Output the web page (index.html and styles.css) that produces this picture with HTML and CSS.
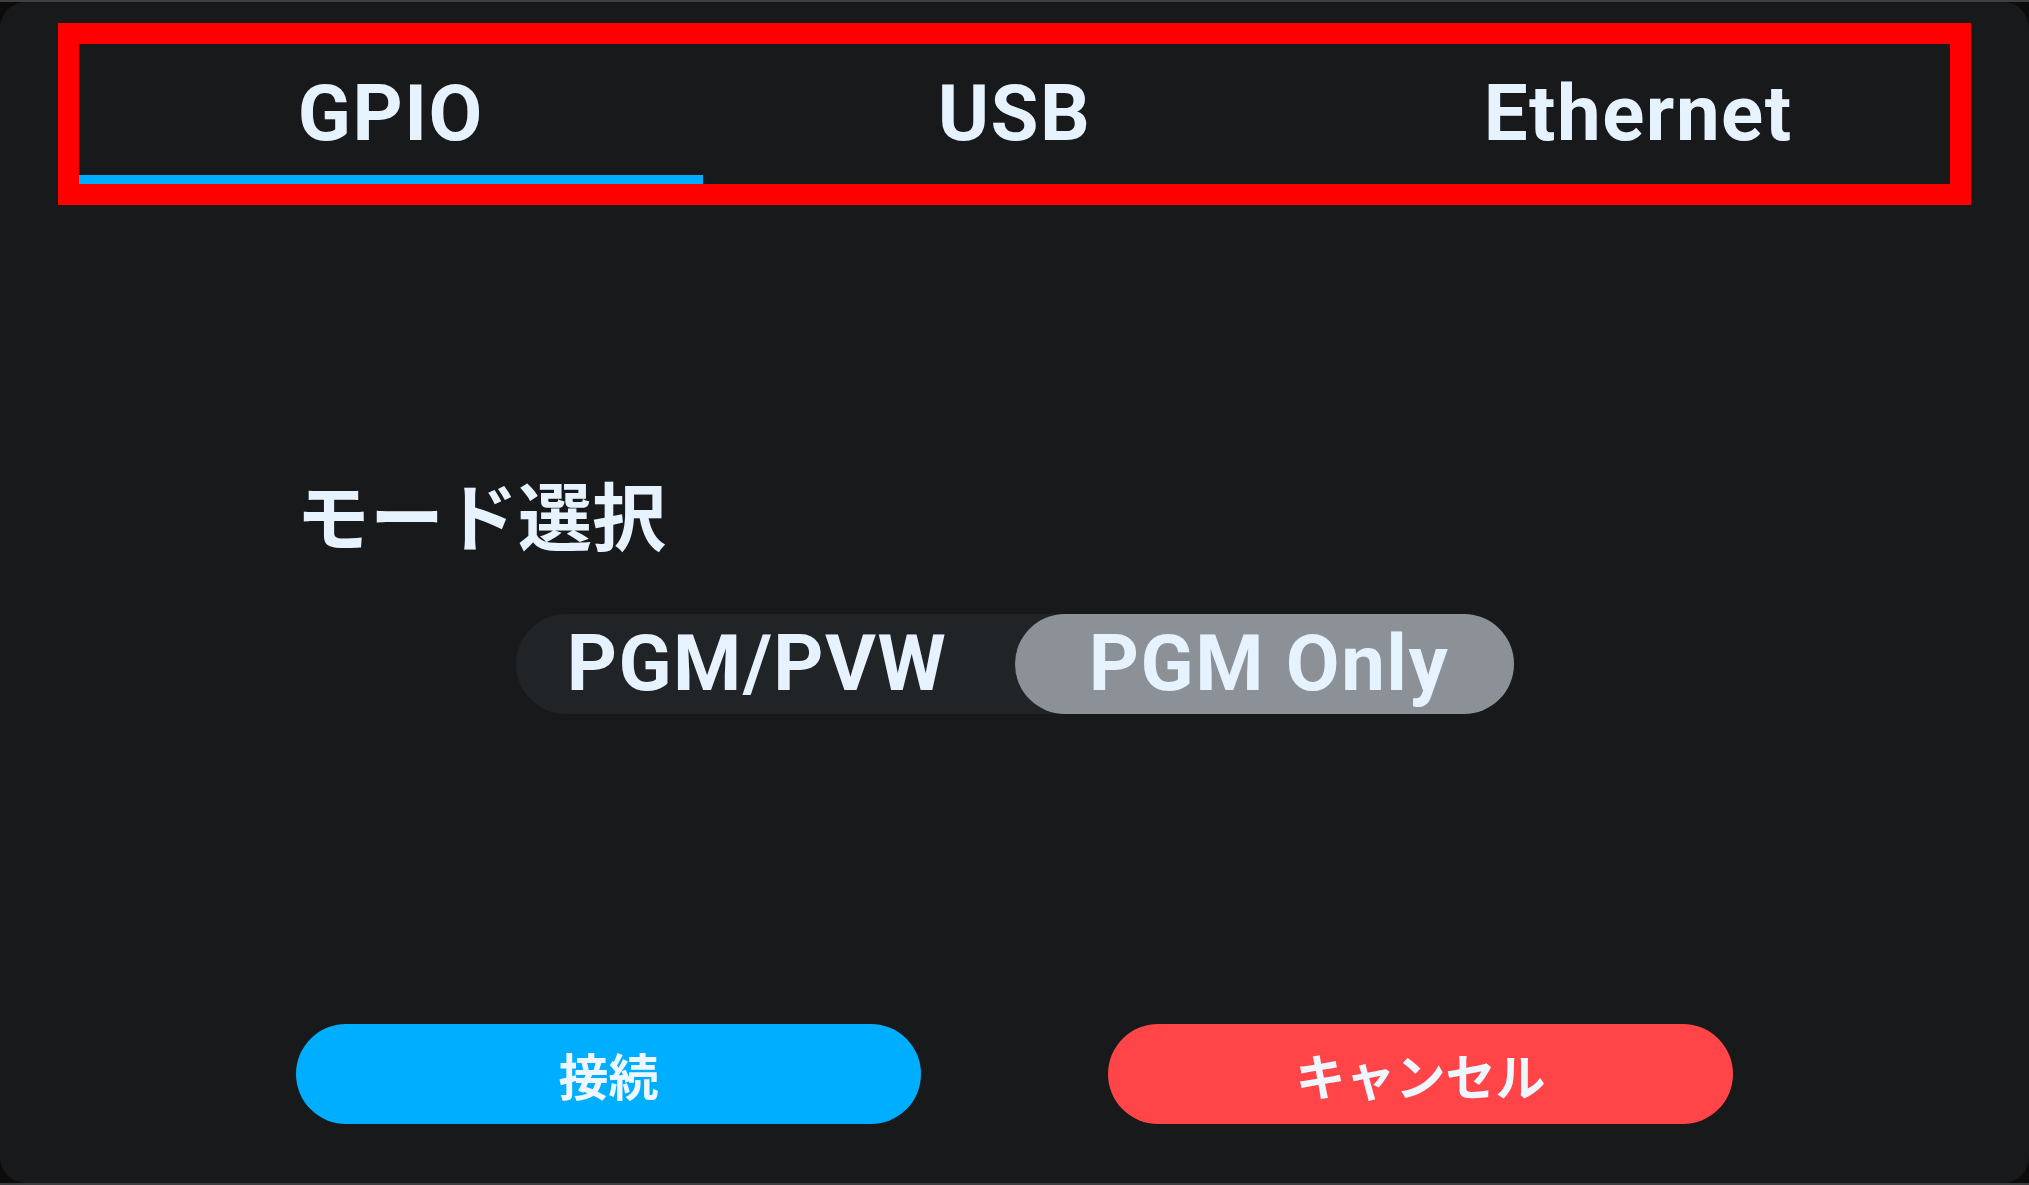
FILE: index.html
```html
<!DOCTYPE html>
<html lang="ja">
<head>
<meta charset="utf-8">
<title>接続設定</title>
<link rel="stylesheet" href="styles.css">
</head>
<body>
<div class="panel">
  <div class="tabs-frame">
    <div class="tabs">
      <div class="tab active">GPIO</div>
      <div class="tab">USB</div>
      <div class="tab">Ethernet</div>
    </div>
  </div>
  <div class="content">
    <div class="label">モード選択</div>
    <div class="segmented">
      <div class="seg seg-left">PGM/PVW</div>
      <div class="seg seg-right selected">PGM Only</div>
    </div>
    <div class="actions">
      <button class="btn btn-connect">接続</button>
      <button class="btn btn-cancel">キャンセル</button>
    </div>
  </div>
</div>
</body>
</html>
```

FILE: styles.css
```css
html, body {
  margin: 0;
  padding: 0;
}
body {
  width: 2029px;
  height: 1185px;
  box-sizing: border-box;
  background: #0c0c0d;
  border-top: 2px solid #3e3f41;
  border-bottom: 2px solid #3e3f41;
  overflow: hidden;
  font-family: Roboto, "Noto Sans CJK JP", sans-serif;
  color: #e6f3ff;
}
.panel {
  height: 100%;
  background: #18191b;
  border-radius: 26px;
  padding: 21px 58px 0;
  box-sizing: border-box;
}
.tabs-frame {
  border: 21px solid #ff0000;
}
.tabs {
  display: flex;
  height: 140px;
}
.tab {
  flex: 1;
  display: flex;
  align-items: center;
  justify-content: center;
  font-family: Roboto, "Liberation Sans", sans-serif;
  font-weight: 700;
  font-size: 78px;
  letter-spacing: 1.5px;
  line-height: 1;
  color: #e6f3ff;
}
.tab.active {
  box-shadow: inset 0 -9px 0 #00aeff;
}
.content {
  width: 1437px;
  margin: 0 auto;
  padding-top: 271px;
}
.label {
  font-family: "Noto Sans CJK JP", sans-serif;
  font-weight: 700;
  font-size: 74px;
  line-height: 1;
}
.segmented {
  width: 998px;
  height: 100px;
  margin: 64px auto 0;
  display: flex;
  background: #212426;
  border-radius: 50px;
}
.seg {
  flex: none;
  width: 50%;
  box-sizing: border-box;
  display: flex;
  align-items: center;
  justify-content: center;
  font-family: Roboto, "Liberation Sans", sans-serif;
  font-weight: 700;
  font-size: 78px;
  letter-spacing: 1.5px;
  line-height: 1;
  border-radius: 50px;
}
.seg-left {
  padding-right: 16px;
}
.seg-right {
  padding-left: 10px;
}
.seg.selected {
  background: #8b9196;
}
.actions {
  display: flex;
  justify-content: space-between;
  margin-top: 310px;
}
.btn {
  width: 625px;
  height: 100px;
  border: none;
  border-radius: 50px;
  font-family: "Noto Sans CJK JP", sans-serif;
  font-weight: 700;
  font-size: 50px;
  color: #eef6ff;
  padding: 0;
}
.btn-connect {
  background: #00aeff;
}
.btn-cancel {
  background: #ff4548;
}
```
